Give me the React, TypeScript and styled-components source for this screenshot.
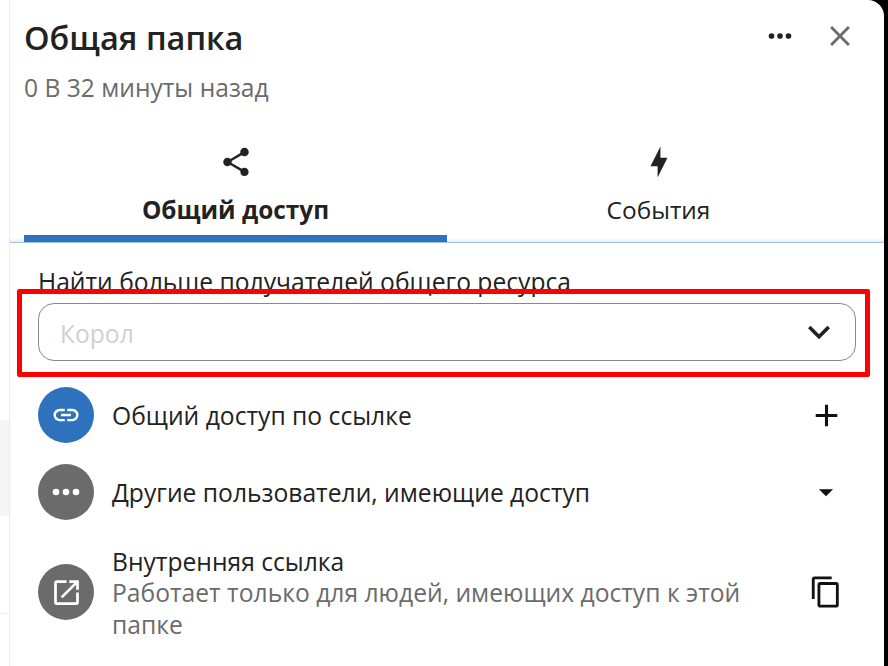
import React from 'react';
import styled, { createGlobalStyle } from 'styled-components';

const GlobalStyle = createGlobalStyle`
  html, body {
    margin: 0;
    padding: 0;
    background: #000;
  }
  body {
    font-family: "Open Sans", "Noto Sans", "Liberation Sans", sans-serif;
    color: #222;
  }
`;

const paths = {
  share:
    'M18,16.08C17.24,16.08 16.56,16.38 16.04,16.85L8.91,12.7C8.96,12.47 9,12.24 9,12C9,11.76 8.96,11.53 8.91,11.3L15.96,7.19C16.5,7.69 17.21,8 18,8A3,3 0 0,0 21,5A3,3 0 0,0 18,2A3,3 0 0,0 15,5C15,5.24 15.04,5.47 15.09,5.7L8.04,9.81C7.5,9.31 6.79,9 6,9A3,3 0 0,0 3,12A3,3 0 0,0 6,15C6.79,15 7.5,14.69 8.04,14.19L15.16,18.34C15.11,18.55 15.08,18.77 15.08,19C15.08,20.61 16.39,21.91 18,21.91C19.61,21.91 20.92,20.61 20.92,19A2.92,2.92 0 0,0 18,16.08Z',
  bolt: 'M11,15H6L13,1V9H18L11,23V15Z',
  dots: 'M16,12A2,2 0 0,1 18,10A2,2 0 0,1 20,12A2,2 0 0,1 18,14A2,2 0 0,1 16,12M10,12A2,2 0 0,1 12,10A2,2 0 0,1 14,12A2,2 0 0,1 12,14A2,2 0 0,1 10,12M4,12A2,2 0 0,1 6,10A2,2 0 0,1 8,12A2,2 0 0,1 6,14A2,2 0 0,1 4,12Z',
  close:
    'M19,6.41L17.59,5L12,10.59L6.41,5L5,6.41L10.59,12L5,17.59L6.41,19L12,13.41L17.59,19L19,17.59L13.41,12L19,6.41Z',
  chevron: 'M7.41,8.58L12,13.17L16.59,8.58L18,10L12,16L6,10L7.41,8.58Z',
  link: 'M3.9,12C3.9,10.29 5.29,8.9 7,8.9H11V7H7A5,5 0 0,0 2,12A5,5 0 0,0 7,17H11V15.1H7C5.29,15.1 3.9,13.71 3.9,12M8,13H16V11H8V13M17,7H13V8.9H17C18.71,8.9 20.1,10.29 20.1,12C20.1,13.71 18.71,15.1 17,15.1H13V17H17A5,5 0 0,0 22,12A5,5 0 0,0 17,7Z',
  plus: 'M19,13H13V19H11V13H5V11H11V5H13V11H19V13Z',
  menuDown: 'M7,10L12,15L17,10H7Z',
  external:
    'M14,3V5H17.59L7.76,14.83L9.17,16.24L19,6.41V10H21V3M19,19H5V5H12V3H5C3.89,3 3,3.9 3,5V19A2,2 0 0,0 5,21H19A2,2 0 0,0 21,19V12H19V19Z',
  copy: 'M19,21H8V7H19M19,5H8A2,2 0 0,0 6,7V21A2,2 0 0,0 8,23H19A2,2 0 0,0 21,21V7A2,2 0 0,0 19,5M16,1H4A2,2 0 0,0 2,3V17H4V3H16V1Z',
};

const Icon = ({ name, size }: { name: keyof typeof paths; size: number }) => (
  <svg width={size} height={size} viewBox="0 0 24 24" fill="currentColor">
    <path d={paths[name]} />
  </svg>
);

const Page = styled.div`
  position: relative;
  display: flex;
  width: 888px;
  height: 666px;
  overflow: hidden;
  background: #000;
`;

const Backdrop = styled.div`
  display: flex;
  flex-direction: column;
  flex: 0 0 9px;
  background: #fff;
`;

const BackdropRow = styled.div<{ $height: number; $shade?: boolean; $line?: boolean }>`
  flex: 0 0 ${(props) => props.$height}px;
  box-sizing: border-box;
  background: ${(props) => (props.$shade ? '#f5f5f5' : '#fff')};
  border-bottom: ${(props) => (props.$line ? '1px solid #ececec' : 'none')};
`;

const Sidebar = styled.aside`
  flex: 0 0 875px;
  box-sizing: border-box;
  height: 666px;
  background: #fff;
  border-left: 1px solid #ececec;
  border-top-right-radius: 16px;
  overflow: hidden;
`;

const Header = styled.header`
  display: flex;
  justify-content: space-between;
  height: 126px;
  padding-left: 14px;
`;

const HeaderText = styled.div`
  padding-top: 16px;
`;

const Title = styled.h2`
  margin: 0;
  font-size: 32.5px;
  line-height: 44px;
  font-weight: 600;
  color: #222;
`;

const Subtitle = styled.div`
  margin-top: 11px;
  font-size: 24.6px;
  line-height: 34px;
  color: #6b6b6b;
`;

const HeaderActions = styled.div`
  display: flex;
  height: 34px;
  gap: 26px;
  margin: 19px 27px 0 0;
`;

const IconButton = styled.span<{ $muted?: boolean }>`
  display: flex;
  color: ${(props) => (props.$muted ? '#6b6b6b' : '#222')};
`;

const TabBar = styled.nav`
  display: flex;
  height: 117px;
  box-sizing: border-box;
  padding: 0 14px;
  border-bottom: 1px solid #a3c1e6;
  background: linear-gradient(to bottom, #fff 0, #e3ebf5 100%) no-repeat bottom / 100% 4px;
`;

const Tab = styled.div<{ $active?: boolean }>`
  flex: 1 1 0;
  display: flex;
  flex-direction: column;
  align-items: center;
  box-sizing: border-box;
  height: 116px;
  padding-top: 19px;
  font-size: 24.4px;
  line-height: 32px;
  font-weight: ${(props) => (props.$active ? 700 : 400)};
  border-bottom: 7px solid ${(props) => (props.$active ? '#2e72be' : 'transparent')};
  color: #222;
`;

const TabLabel = styled.span`
  margin-top: 15px;
`;

const Content = styled.section`
  padding: 24px 28px 0 28px;
`;

const FieldLabel = styled.label`
  display: block;
  font-size: 24.65px;
  line-height: 30px;
  color: #222;
`;

const SelectBox = styled.div`
  display: flex;
  align-items: center;
  justify-content: space-between;
  box-sizing: border-box;
  height: 58px;
  margin-top: 6px;
  padding: 0 15px 0 21px;
  border: 1px solid #888;
  border-radius: 16px;
`;

const Placeholder = styled.span`
  padding-top: 2px;
  font-size: 24.6px;
  color: #d0d0d0;
`;

const ChevronWrap = styled.span`
  display: flex;
  width: 44px;
  height: 44px;
  margin-right: -1px;
  color: #222;
`;

const EntryList = styled.div`
  display: flex;
  flex-direction: column;
  margin-top: 15px;
`;

const Entry = styled.div<{ $height: number; $gap?: number }>`
  display: flex;
  align-items: center;
  gap: 18px;
  height: ${(props) => props.$height}px;
  margin-top: ${(props) => props.$gap ?? 0}px;
`;

const Avatar = styled.div<{ $accent?: boolean }>`
  flex: 0 0 56px;
  display: flex;
  align-items: center;
  justify-content: center;
  width: 56px;
  height: 56px;
  border-radius: 50%;
  color: #fff;
  background: ${(props) => (props.$accent ? '#2e72be' : '#6b6b6b')};
`;

const EntryText = styled.div`
  flex: 1 1 auto;
  padding-top: 2px;
  font-size: 24.65px;
  line-height: 31.5px;
  color: #222;
`;

const EntryHint = styled.div`
  color: #6b6b6b;
`;

const EntryAction = styled.span`
  flex: 0 0 40px;
  display: flex;
  justify-content: center;
  margin-right: 10px;
  color: #111;
`;

const Highlight = styled.div`
  position: absolute;
  left: 17px;
  top: 289px;
  width: 853px;
  height: 88px;
  box-sizing: border-box;
  border: 5px solid #f00;
  border-radius: 2px;
  pointer-events: none;
`;

const App = () => (
  <Page>
    <GlobalStyle />
    <Backdrop>
      <BackdropRow $height={420} />
      <BackdropRow $height={96} $shade />
      <BackdropRow $height={98} $line />
    </Backdrop>
    <Sidebar>
      <Header>
        <HeaderText>
          <Title>Общая папка</Title>
          <Subtitle>0 В 32 минуты назад</Subtitle>
        </HeaderText>
        <HeaderActions>
          <IconButton>
            <Icon name="dots" size={34} />
          </IconButton>
          <IconButton $muted>
            <Icon name="close" size={34} />
          </IconButton>
        </HeaderActions>
      </Header>
      <TabBar>
        <Tab $active>
          <Icon name="share" size={34} />
          <TabLabel>Общий доступ</TabLabel>
        </Tab>
        <Tab>
          <Icon name="bolt" size={34} />
          <TabLabel>События</TabLabel>
        </Tab>
      </TabBar>
      <Content>
        <FieldLabel>Найти больше получателей общего ресурса</FieldLabel>
        <SelectBox>
          <Placeholder>Корол</Placeholder>
          <ChevronWrap>
            <Icon name="chevron" size={44} />
          </ChevronWrap>
        </SelectBox>
        <EntryList>
          <Entry $height={78}>
            <Avatar $accent>
              <Icon name="link" size={30} />
            </Avatar>
            <EntryText>Общий доступ по ссылке</EntryText>
            <EntryAction>
              <Icon name="plus" size={37} />
            </EntryAction>
          </Entry>
          <Entry $height={78} $gap={-1}>
            <Avatar>
              <Icon name="dots" size={40} />
            </Avatar>
            <EntryText>Другие пользователи, имеющие доступ</EntryText>
            <EntryAction>
              <Icon name="menuDown" size={34} />
            </EntryAction>
          </Entry>
          <Entry $height={110} $gap={6}>
            <Avatar>
              <Icon name="external" size={33} />
            </Avatar>
            <EntryText>
              Внутренняя ссылка
              <EntryHint>Работает только для людей, имеющих доступ к этой папке</EntryHint>
            </EntryText>
            <EntryAction>
              <Icon name="copy" size={34} />
            </EntryAction>
          </Entry>
        </EntryList>
      </Content>
    </Sidebar>
    <Highlight />
  </Page>
);

export default App;
